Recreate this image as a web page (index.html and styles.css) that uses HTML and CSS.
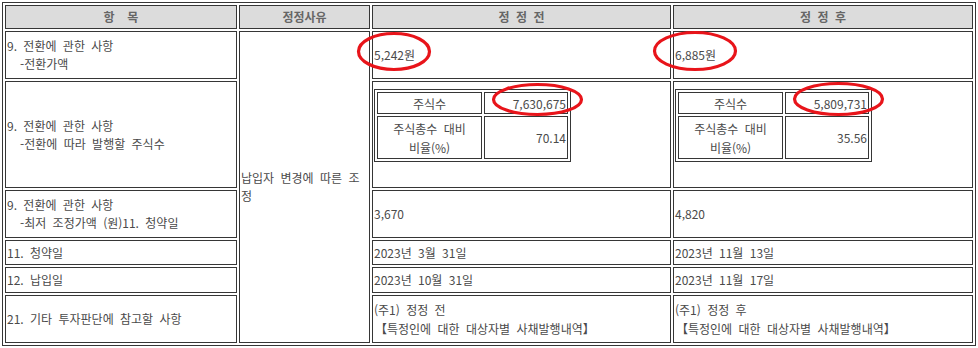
FILE: index.html
```html
<!DOCTYPE html>
<html lang="ko">
<head>
<meta charset="utf-8">
<title>정정 내역</title>
<link rel="stylesheet" href="styles.css">
</head>
<body>
<div class="page">
  <table class="grid">
    <thead>
      <tr class="row-head">
        <th class="c1">항&nbsp;&nbsp;목</th>
        <th class="c2">정정사유</th>
        <th class="c3">정 정 전</th>
        <th class="c4">정 정 후</th>
      </tr>
    </thead>
    <tbody>
      <tr class="row-48">
        <td>9. 전환에 관한 사항<br><span class="ind">-전환가액</span></td>
        <td rowspan="6" class="reason">납입자 변경에 따른 조정</td>
        <td>5,242원</td>
        <td>6,885원</td>
      </tr>
      <tr class="row-107">
        <td>9. 전환에 관한 사항<br><span class="ind">-전환에 따라 발행할 주식수</span></td>
        <td class="nest-cell">
          <table class="nest">
            <tr class="nrow-1"><td class="nk">주식수</td><td class="nv">7,630,675</td></tr>
            <tr class="nrow-2"><td class="nk">주식총수 대비<br>비율(%)</td><td class="nv">70.14</td></tr>
          </table>
          <div class="blank"></div>
        </td>
        <td class="nest-cell">
          <table class="nest">
            <tr class="nrow-1"><td class="nk">주식수</td><td class="nv">5,809,731</td></tr>
            <tr class="nrow-2"><td class="nk">주식총수 대비<br>비율(%)</td><td class="nv">35.56</td></tr>
          </table>
          <div class="blank"></div>
        </td>
      </tr>
      <tr class="row-48">
        <td>9. 전환에 관한 사항<br><span class="ind">-최저 조정가액 (원)11. 청약일</span></td>
        <td>3,670</td>
        <td>4,820</td>
      </tr>
      <tr class="row-25">
        <td>11. 청약일</td>
        <td>2023년 3월 31일</td>
        <td>2023년 11월 13일</td>
      </tr>
      <tr class="row-26">
        <td>12. 납입일</td>
        <td>2023년 10월 31일</td>
        <td>2023년 11월 17일</td>
      </tr>
      <tr class="row-48">
        <td>21. 기타 투자판단에 참고할 사항</td>
        <td class="note">(주1) 정정 전<br><span class="ind-s">【특정인에 대한 대상자별 사채발행내역】</span></td>
        <td class="note">(주1) 정정 후<br><span class="ind-s">【특정인에 대한 대상자별 사채발행내역】</span></td>
      </tr>
    </tbody>
  </table>

  <svg class="marks" width="978" height="348" viewBox="0 0 978 348" aria-hidden="true">
    <ellipse cx="394" cy="51.5" rx="35.5" ry="18" />
    <ellipse cx="695" cy="51" rx="40.5" ry="18.5" />
    <ellipse cx="537.5" cy="99.5" rx="44" ry="15" />
    <ellipse cx="838.5" cy="99" rx="44" ry="15.5" />
  </svg>
</div>
</body>
</html>
```

FILE: styles.css
```css
* {
  box-sizing: border-box;
}

html {
  margin: 0;
  background: #ffffff;
}

body {
  margin: 2px;
  font-family: "Noto Sans CJK KR", "Noto Sans", sans-serif;
  font-size: 12px;
  color: #4a4a4a;
}

.page {
  position: relative;
}

.grid {
  width: 974px;
  table-layout: fixed;
  border: 1px solid #363636;
  border-collapse: separate;
  border-spacing: 2px;
  word-spacing: 3px;
}

.grid th,
.grid td {
  border: 1px solid #363636;
  padding: 0 1px;
  line-height: 18px;
  vertical-align: middle;
  text-align: left;
  font-weight: normal;
}

.grid th {
  background: #dcdcdc;
  color: #666666;
  font-weight: bold;
  text-align: center;
}

.c1 { width: 232px; }
.c2 { width: 131px; }
.c3 { width: 299px; }
.c4 { width: 300px; }

.row-head { height: 24px; }
.row-48 { height: 48px; }
.row-107 { height: 107px; }
.row-25 { height: 25px; }
.row-26 { height: 26px; }

.ind {
  padding-left: 13px;
}

.ind-s {
  padding-left: 1px;
}

.grid td.note {
  line-height: 19px;
}

.reason {
  word-break: break-all;
}

.nest {
  width: 197px;
  table-layout: fixed;
  border: 1px solid #363636;
  border-collapse: separate;
  border-spacing: 2px;
}

.nest td.nk {
  width: 105px;
  text-align: center;
}

.nest td.nv {
  width: 84px;
  text-align: right;
}

.nrow-1 { height: 22px; }
.nrow-2 { height: 43px; }

.nest td.nk,
.nest td.nv {
  line-height: 19px;
}

.blank {
  height: 18px;
}

.marks {
  position: absolute;
  left: -2px;
  top: -2px;
  pointer-events: none;
}

.marks ellipse {
  fill: none;
  stroke: #e8141a;
  stroke-width: 3.2;
}
```
